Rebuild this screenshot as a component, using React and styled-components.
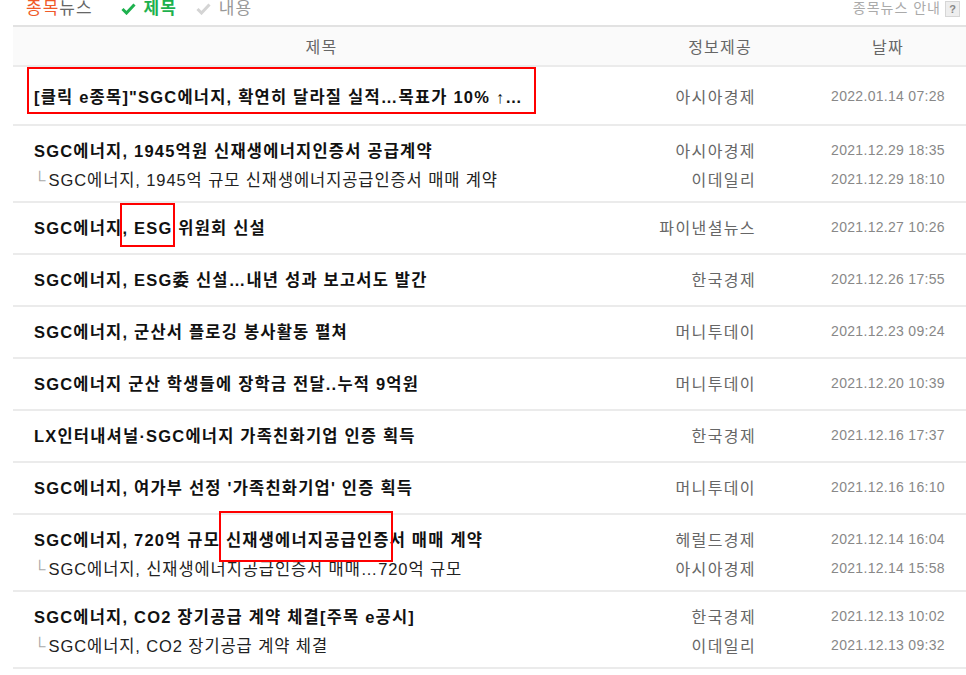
import styled, { createGlobalStyle } from "styled-components";

const GlobalStyle = createGlobalStyle`
    body {
        margin: 0;
        background: #fff;
        font-family: "Liberation Sans", "Noto Sans CJK KR", sans-serif;
    }
`

const Page = styled.div`
    position: relative;
    width: 966px;
    height: 675px;
    overflow: hidden;
    padding-left: 13px;
    box-sizing: border-box;
`
const TopBar = styled.div`
    display: flex;
    justify-content: space-between;
    align-items: flex-start;
    height: 25px;
    padding: 0 6px 0 13px;
    font-size: 17px;
    line-height: 17px;
    letter-spacing: 1px;
`
const Tabs = styled.div`
    display: flex;
    align-items: center;
`
const Brand = styled.span`
    color: #666;
    margin-right: 28px;
    & > b {
        font-weight: 400;
        color: #f05a28;
    }
`
const Tab = styled.span`
    display: flex;
    align-items: center;
    gap: 8px;
    margin-right: 19px;
    color: ${({ on }) => (on ? "#1eb14e" : "#999")};
    font-weight: ${({ on }) => (on ? 700 : 400)};
`
const Guide = styled.div`
    display: flex;
    align-items: center;
    gap: 4px;
    font-size: 14px;
    letter-spacing: 1px;
    color: #aaa;
`
const Help = styled.span`
    width: 13px;
    height: 14px;
    border: 1px solid #d6d6d6;
    background: #eee;
    color: #888;
    font-size: 11px;
    font-weight: 700;
    line-height: 14px;
    letter-spacing: 0;
    text-align: center;
`
const Table = styled.div`
    border-top: 2px solid #e2e2e2;
    width: 953px;
`
const cols = "617px 180px 156px"

const HeaderRow = styled.div`
    display: grid;
    grid-template-columns: ${cols};
    height: 38px;
    align-items: center;
    background: #fafafa;
    border-bottom: 2px solid #ebebeb;
    font-family: "Noto Sans CJK KR", sans-serif;
    font-size: 16px;
    letter-spacing: 1.2px;
    color: #666;
    text-align: center;
`
const Row = styled.div`
    padding: ${({ featured }) => (featured ? "12px 0 12px" : "7px 0 10px")};
    border-bottom: 2px solid #ebebeb;
`
const Line = styled.div`
    display: grid;
    grid-template-columns: ${cols};
    align-items: center;
    height: ${({ sub }) => (sub ? "25px" : "33px")};
`
const Title = styled.div`
    padding-left: 21px;
    font-size: 16.5px;
    font-weight: ${({ sub }) => (sub ? 400 : 700)};
    color: ${({ sub }) => (sub ? "#222" : "#111")};
    letter-spacing: ${({ sub }) => (sub ? "0.9px" : "1.2px")};
    white-space: nowrap;
    overflow: hidden;
`
const Branch = styled.span`
    color: #aaa;
    margin-right: 2px;
`
const Source = styled.div`
    text-align: right;
    padding-right: 54px;
    font-family: "Noto Sans CJK KR", sans-serif;
    font-size: 16px;
    letter-spacing: 1.4px;
    color: #666;
`
const DateCell = styled.div`
    text-align: center;
    font-size: 14px;
    letter-spacing: 0.3px;
    color: #888;
`
const Mark = styled.div`
    position: absolute;
    border: 2px solid #f00;
    box-sizing: border-box;
`

const Check = ({ color }) => (
    <svg width="15" height="12" viewBox="0 0 15 12">
        <polyline points="1.5,6 5.5,10 13.5,1.5" fill="none" stroke={color} strokeWidth="3" />
    </svg>
)

const news = [
    { featured: true, lines: [["[클릭 e종목]\"SGC에너지, 확연히 달라질 실적…목표가 10% ↑…", "아시아경제", "2022.01.14 07:28"]] },
    { lines: [
        ["SGC에너지, 1945억원 신재생에너지인증서 공급계약", "아시아경제", "2021.12.29 18:35"],
        ["SGC에너지, 1945억 규모 신재생에너지공급인증서 매매 계약", "이데일리", "2021.12.29 18:10"],
    ] },
    { lines: [["SGC에너지, ESG 위원회 신설", "파이낸셜뉴스", "2021.12.27 10:26"]] },
    { lines: [["SGC에너지, ESG委 신설…내년 성과 보고서도 발간", "한국경제", "2021.12.26 17:55"]] },
    { lines: [["SGC에너지, 군산서 플로깅 봉사활동 펼쳐", "머니투데이", "2021.12.23 09:24"]] },
    { lines: [["SGC에너지 군산 학생들에 장학금 전달..누적 9억원", "머니투데이", "2021.12.20 10:39"]] },
    { lines: [["LX인터내셔널·SGC에너지 가족친화기업 인증 획득", "한국경제", "2021.12.16 17:37"]] },
    { lines: [["SGC에너지, 여가부 선정 '가족친화기업' 인증 획득", "머니투데이", "2021.12.16 16:10"]] },
    { lines: [
        ["SGC에너지, 720억 규모 신재생에너지공급인증서 매매 계약", "헤럴드경제", "2021.12.14 16:04"],
        ["SGC에너지, 신재생에너지공급인증서 매매…720억 규모", "아시아경제", "2021.12.14 15:58"],
    ] },
    { lines: [
        ["SGC에너지, CO2 장기공급 계약 체결[주목 e공시]", "한국경제", "2021.12.13 10:02"],
        ["SGC에너지, CO2 장기공급 계약 체결", "이데일리", "2021.12.13 09:32"],
    ] },
]

const marks = [
    { left: 27, top: 67, width: 509, height: 47 },
    { left: 120, top: 203, width: 55, height: 44 },
    { left: 219, top: 511, width: 174, height: 51 },
]

const App = () => {

    return(
        <Page>
            <GlobalStyle />
            <TopBar>
                <Tabs>
                    <Brand><b>종목</b>뉴스</Brand>
                    <Tab on><Check color="#1eb14e" />제목</Tab>
                    <Tab><Check color="#d4d4d4" />내용</Tab>
                </Tabs>
                <Guide>
                    종목뉴스 안내
                    <Help>?</Help>
                </Guide>
            </TopBar>

            <Table>
                <HeaderRow>
                    <div>제목</div>
                    <div>정보제공</div>
                    <div>날짜</div>
                </HeaderRow>

                {news.map((item, i) => (
                    <Row key={i} featured={item.featured}>
                        {item.lines.map(([title, source, date], j) => (
                            <Line key={j} sub={j > 0}>
                                <Title sub={j > 0}>
                                    {j > 0 && <Branch>└</Branch>}
                                    {title}
                                </Title>
                                <Source>{source}</Source>
                                <DateCell>{date}</DateCell>
                            </Line>
                        ))}
                    </Row>
                ))}
            </Table>

            {marks.map((m, i) => (
                <Mark key={i} style={m} />
            ))}
        </Page>
    )

}

export default App;
